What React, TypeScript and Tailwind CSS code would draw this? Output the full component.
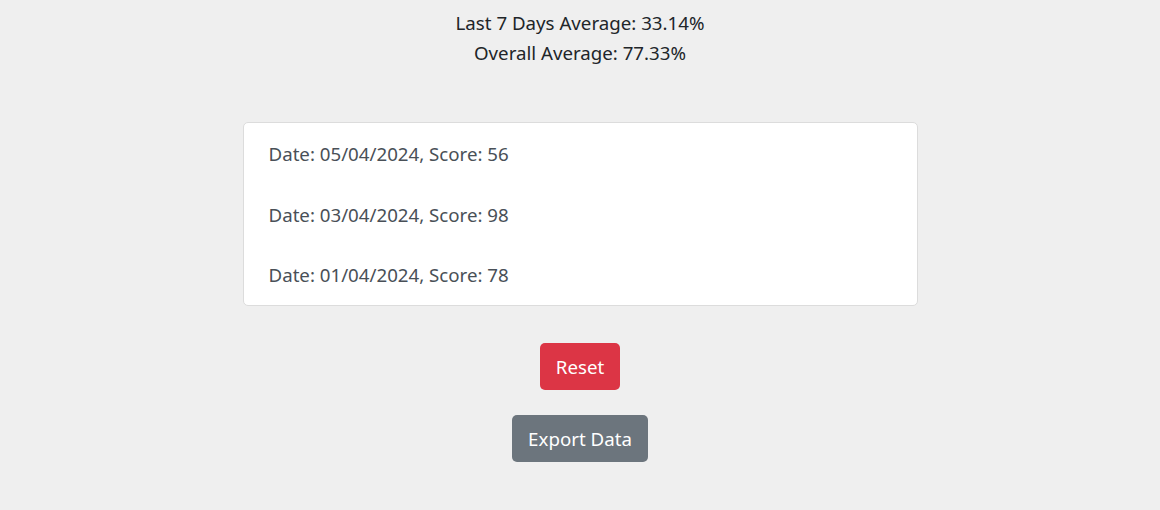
const entries = [
  { date: "05/04/2024", score: 56 },
  { date: "03/04/2024", score: 98 },
  { date: "01/04/2024", score: 78 },
];

export default function App() {
  return (
    <div className="min-h-screen bg-[#efefef] font-['Noto_Sans',sans-serif] text-[18.7px] leading-[30px]">
      <div className="flex flex-col items-center pt-[8px]">
        <p className="text-[#212529]">Last 7 Days Average: 33.14%</p>
        <p className="text-[#212529]">Overall Average: 77.33%</p>

        <ul className="mt-[54px] w-[675px] rounded-[5px] border border-[#dcdcdc] bg-white">
          {entries.map((e) => (
            <li
              key={e.date}
              className="flex h-[60.5px] items-center px-[25px] pt-[2px] text-[#495057]"
            >
              Date: {e.date}, Score: {e.score}
            </li>
          ))}
        </ul>

        <button className="mt-[37px] h-[47px] w-[80px] rounded-[5px] bg-[#dc3545] pt-[2px] text-white">
          Reset
        </button>

        <button className="mt-[25px] h-[47px] w-[136px] rounded-[5px] bg-[#6c757d] pt-[2px] text-white">
          Export Data
        </button>
      </div>
    </div>
  );
}
